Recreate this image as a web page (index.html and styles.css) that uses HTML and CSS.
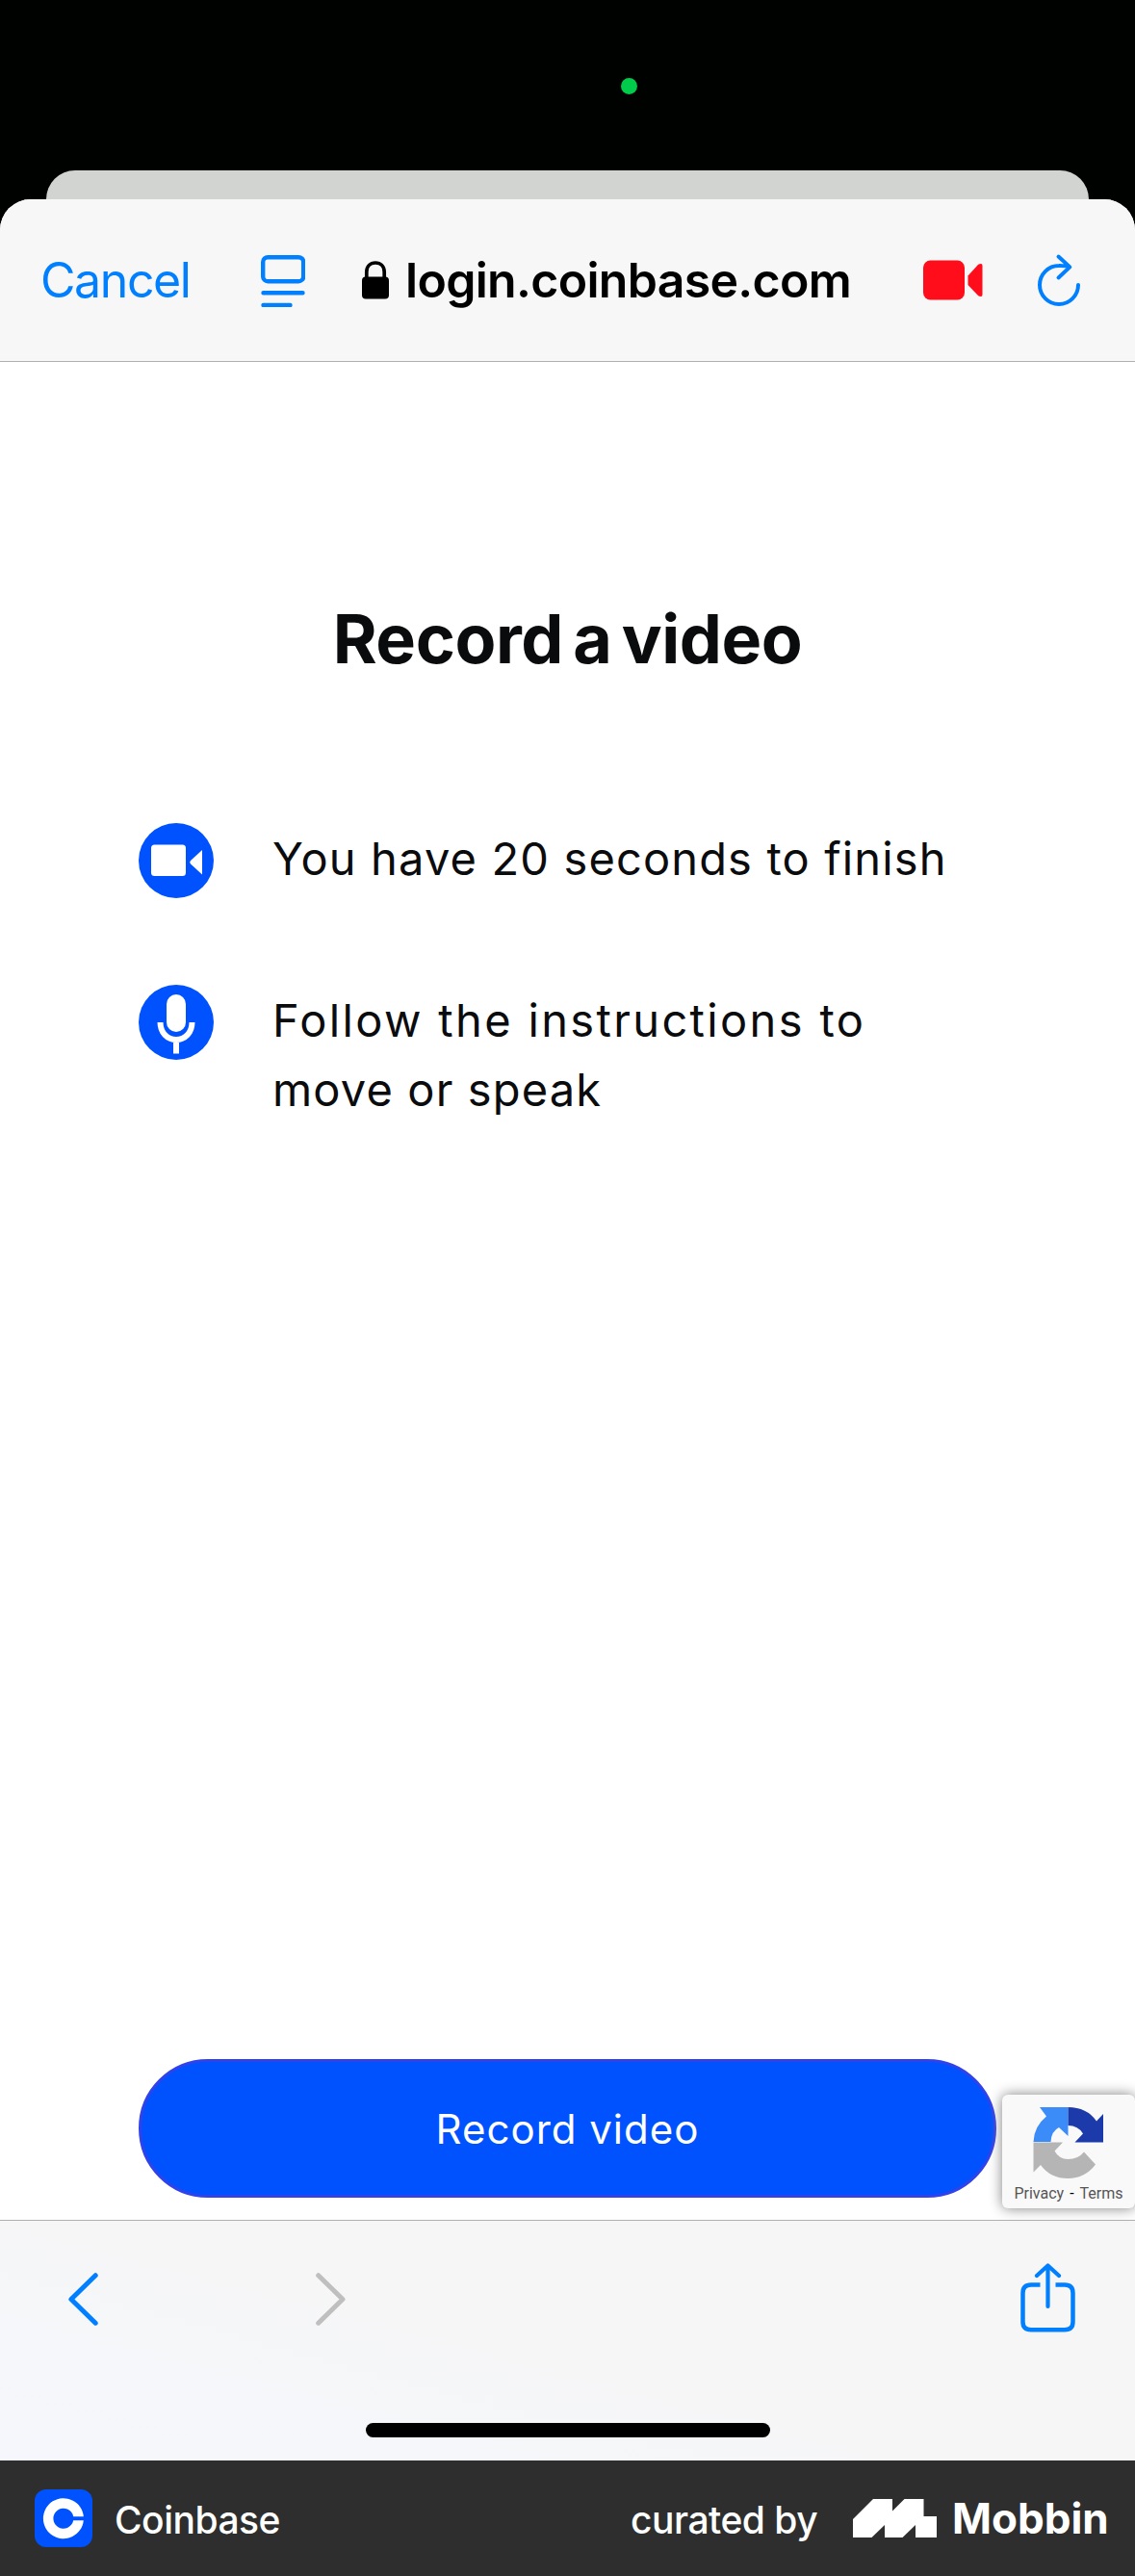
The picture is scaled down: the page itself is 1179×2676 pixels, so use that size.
FILE: index.html
```html
<!DOCTYPE html>
<html lang="en">
<head>
<meta charset="utf-8">
<title>Record a video</title>
<link rel="stylesheet" href="styles.css">
</head>
<body>
<div class="status"><span class="camera-dot"></span></div>
<div class="back-sheet"></div>
<div class="sheet">
  <header class="toolbar">
    <a class="cancel">Cancel</a>
    <svg class="reader" width="46" height="56" viewBox="0 0 46 56" fill="none" stroke="#007fff" stroke-width="4.4" stroke-linecap="round"><rect x="2.2" y="4.200" width="42" height="25" rx="5"/><path d="M2.500 41.200H43.500M2.500 54H30.500"/></svg>
    <svg class="lock" width="30" height="40" viewBox="0 0 30 40"><path d="M5.800 18V11.500C5.800 5.500 9.800 2 15 2s9.200 3.500 9.200 9.500V18" fill="none" stroke="#000" stroke-width="3.700"/><rect x="1" y="16.500" width="28" height="23" rx="4" fill="#000"/></svg>
    <span class="domain">login.coinbase.com</span>
    <svg class="recording" width="62" height="42" viewBox="0 0 62 42" fill="#ff0d1b"><rect x="0" y="0.500" width="43" height="41" rx="7.500"/><path d="M46.500 16.500L56.500 5.500Q58 4 60 4Q61.500 4 61.500 6V36Q61.500 38 60 38Q58 38 56.500 36.500L46.500 26Z"/></svg>
    <svg class="reload" width="48" height="58" viewBox="0 0 48 58" fill="none" stroke="#007fff" stroke-width="4" stroke-linecap="round" stroke-linejoin="round"><path d="M43 34A20 20 0 1 1 23 14Q29 13.800 34 15.400M22.500 4.500L34.300 15.400L22.500 26.500"/></svg>
  </header>
  <main class="page">
    <h1 class="title">Record a video</h1>
    <ul class="steps">
      <li class="step">
        <svg class="step-icon" width="78" height="78" viewBox="0 0 78 78"><circle cx="39" cy="39" r="39" fill="#0052ff"/><g fill="#fff"><rect x="13" y="22.500" width="36" height="32.500" rx="3.500"/><path d="M66 28V53.500L54 42.500Q52.300 40.700 54 39Z"/></g></svg>
        <p class="step-text">You have 20 seconds to finish</p>
      </li>
      <li class="step">
        <svg class="step-icon" width="78" height="78" viewBox="0 0 78 78"><circle cx="39" cy="39" r="39" fill="#0052ff"/><rect x="29" y="10" width="20" height="39" rx="10" fill="#fff"/><path d="M22.500 39C22.500 50 30 57 39 57s16.500-7 16.500-18M39 57V71.500" fill="none" stroke="#fff" stroke-width="6"/></svg>
        <p class="step-text"><span class="wide">Follow the instructions to</span><br>move or speak</p>
      </li>
    </ul>
    <button class="record">Record video</button>
    <aside class="captcha">
      <svg class="captcha-logo" width="74" height="76" viewBox="0 0 74 76"><path d="M36.500 1V31L27 22Q19 26 18.500 37H.500Q1 21 14 10.500L7 1Z" fill="#3b8cf8"/><path d="M36.500 1Q56 1 66 15.500L73 8V37.500H43.500L52 28.500Q47 20 36.500 20Z" fill="#1c3aa9"/><path d="M.500 37.500H31L22.500 46.500Q27 55 36.500 55Q47 55 53 47.500L65 60.500Q54 75 36.500 75Q18 75 8 61L.500 68.500Z" fill="#b5b5b5"/></svg>
      <div class="captcha-links">Privacy<span class="dash">-</span>Terms</div>
    </aside>
  </main>
  <nav class="bottom-bar">
    <div class="nav-row">
      <svg class="back" width="31" height="55" viewBox="0 0 31 55" fill="none" stroke="#007fff" stroke-width="5" stroke-linecap="round" stroke-linejoin="round"><path d="M28.200 2.700L2.900 27.500L28.200 52.200"/></svg>
      <svg class="forward" width="31" height="55" viewBox="0 0 31 55" fill="none" stroke="#bfbfbf" stroke-width="5" stroke-linecap="round" stroke-linejoin="round"><path d="M2.700 2.700L28 27.500L2.700 52.200"/></svg>
      <svg class="share" width="58" height="72" viewBox="0 0 58 72" fill="none" stroke="#007fff" stroke-width="4.500"><path d="M20.500 22.600H11Q2.500 22.600 2.500 31V61Q2.500 69.200 11 69.200H46Q54.500 69.200 54.500 61V31Q54.500 22.600 46 22.600H36.500"/><path d="M28.500 45V3M17 13L28.500 2.500L40 13" stroke-width="4.200" stroke-linecap="round" stroke-linejoin="round"/></svg>
    </div>
    <div class="home"></div>
  </nav>
</div>
<footer class="credit">
  <svg class="app-icon" width="60" height="60" viewBox="0 0 60 60"><rect width="60" height="60" rx="12" fill="#0052ff"/><path d="M50.800 28.200A21 21 0 1 0 50.800 32.200H40.200A10.500 10.500 0 1 1 40.200 28.200Z" fill="#fff"/></svg>
  <span class="app-name">Coinbase</span>
  <span class="curated">curated by</span>
  <svg class="mobbin-logo" width="87" height="40" viewBox="0 0 87 40"><path d="M0 21L21 0H41V12.500L53.500 0H73.500V18H87V40H65V27L51.500 40H33V27L19.500 40H0Z" fill="#fff"/></svg>
  <span class="mobbin">Mobbin</span>
</footer>
</body>
</html>
```
FILE: styles.css
```css
* { box-sizing: border-box; }
body { margin: 0; width: 1179px; height: 2676px; background: #000200; font-family: Inter, "Liberation Sans", sans-serif; display: flex; flex-direction: column; overflow: hidden; }
svg { display: block; flex: none; }
.status { height: 177px; flex: none; padding: 81px 0 0 645px; }
.camera-dot { display: block; width: 17px; height: 17px; border-radius: 50%; background: #00cb4b; }
.back-sheet { height: 72px; flex: none; margin: 0 48px -42px; background: #d1d4d0; border-radius: 30px 30px 0 0; }
.sheet { height: 2349px; flex: none; background: #fff; border-radius: 32px 32px 0 0; overflow: hidden; position: relative; display: flex; flex-direction: column; }
.toolbar { height: 169px; flex: none; background: #f7f7f7; border-bottom: 1px solid #b0b0b0; display: flex; align-items: center; padding-left: 42px; white-space: nowrap; }
.cancel { color: #007fff; font-size: 50px; letter-spacing: -1.4px; width: 229px; }
.reader { margin-right: 58px; }
.lock { margin-right: 16px; }
.domain { font-size: 50px; font-weight: 600; letter-spacing: -0.7px; width: 538px; }
.recording { margin-right: 56px; }
.page { height: 1930px; flex: none; padding: 246px 144px 0; display: flex; flex-direction: column; position: relative; }
.title { margin: 0; font-size: 70px; line-height: 84px; font-weight: 700; letter-spacing: -0.4px; word-spacing: -6px; text-align: center; color: #0a0b0d; }
.steps { list-style: none; margin: 149px 0 0; padding: 0; display: flex; flex-direction: column; gap: 90px; height: 1284px; flex: none; }
.step { display: flex; gap: 61px; min-height: 78px; white-space: nowrap; }
.step-text { margin: 1px 0 0; font-size: 47px; line-height: 72px; letter-spacing: 1.15px; color: #0a0b0d; }
.wide { letter-spacing: 2.35px; }
.record { width: 891px; height: 144px; flex: none; border: 3px solid #3042ea; border-radius: 72px; background: #0052ff; color: #fff; font: 400 42px Inter, sans-serif; letter-spacing: 1px; padding: 0; }
.captcha { position: absolute; left: 1041px; top: 1800px; width: 138px; height: 118px; background: #f9f9f9; border-radius: 6px; box-shadow: 0 0 14px #808080; padding-top: 12px; display: flex; flex-direction: column; align-items: center; }
.captcha-links { font: 16px/20px Roboto, sans-serif; color: #555; margin-top: 5px; white-space: nowrap; }
.dash { margin: 0 6px; color: #000; }
.bottom-bar { height: 250px; flex: none; border-top: 1px solid #b0b0b0; background: linear-gradient(15deg, #f5f7fc, #f6f6f6 55%); }
.nav-row { display: flex; padding: 44px 61px 0 71px; height: 210px; }
.back, .forward { margin-top: 10px; }
.forward { margin-left: 226px; }
.share { margin-left: auto; }
.home { width: 420px; height: 15px; margin: 0 auto; border-radius: 8px; background: #000; }
.credit { height: 120px; flex: none; background: #2e2e2e; color: #fff; display: flex; align-items: center; padding-left: 36px; white-space: nowrap; }
.app-name, .curated { font-size: 39px; font-weight: 500; letter-spacing: -0.5px; padding-top: 3px; }
.app-name { margin-left: 23px; width: 536px; }
.curated { width: 231px; }
.mobbin { font-size: 44px; font-weight: 700; margin-left: 16px; }
```
